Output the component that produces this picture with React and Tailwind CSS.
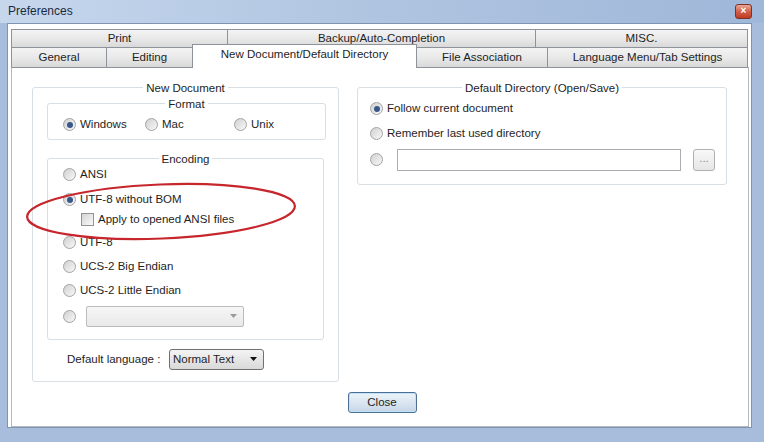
import React from "react";

const Radio = ({ checked }) => (
  <span className="w-[13px] h-[13px] shrink-0 rounded-full border border-[#a3a3a3] bg-linear-to-br from-[#d0d0d0] to-[#f9f9f9] flex items-center justify-center">
    {checked && <span className="w-[6px] h-[6px] rounded-full bg-[#36598a]" />}
  </span>
);

const Option = ({ checked, label, className = "" }) => (
  <div className={`flex items-center h-[16px] gap-[4px] ${className}`}>
    <Radio checked={checked} />
    <span>{label}</span>
  </div>
);

const GroupBox = ({ title, className = "", children }) => (
  <fieldset className={`border border-[#d7dee4] rounded-[3px] ${className}`}>
    <legend className="mx-auto px-[3px] leading-[14px]">{title}</legend>
    {children}
  </fieldset>
);

const Arrow = ({ color }) => (
  <svg width="7" height="4" viewBox="0 0 7 4">
    <path d="M0 0h7L3.5 4z" fill={color} />
  </svg>
);

const Tab = ({ label, className = "" }) => (
  <div
    className={`flex items-center justify-center border-[#8e929a] bg-linear-to-b from-[#f3f3f3] via-[#e9e9e9] to-[#d9d9d9] ${className}`}
  >
    {label}
  </div>
);

export default function App() {
  return (
    <div className="w-[764px] h-[442px] bg-[#a7bddb] flex flex-col pl-[7px] pr-[12px] pb-[14px] text-[11.5px] text-[#1e1e1e] font-['Liberation_Sans',Arial,sans-serif] overflow-hidden">
      {/* title bar */}
      <div className="h-[23px] -ml-[7px] -mr-[12px] pl-[8px] pr-[12px] flex items-center justify-between bg-linear-to-r from-[#c6d7ed] via-[#afc4e0] to-[#9fb7d9]">
        <span className="text-[12px] text-[#1b2a3d]">Preferences</span>
        <div className="w-[17px] h-[15px] rounded-[3px] border border-[#7c3326] bg-linear-to-b from-[#e9a794] via-[#d2604a] to-[#c03a24] flex items-center justify-center text-white text-[10px] font-bold leading-none">
          ×
        </div>
      </div>

      {/* client */}
      <div className="h-[406px] bg-white border border-[#7f94b1] pl-[3px] pr-[2px] pt-[5px]">
        {/* tabs back row */}
        <div className="flex h-[18px]">
          <Tab label="Print" className="w-[216px] border-l border-t" />
          <Tab label="Backup/Auto-Completion" className="w-[308px] border-l border-t" />
          <Tab label="MISC." className="w-[213px] border-l border-t border-r" />
        </div>
        {/* tabs front row */}
        <div className="flex items-end h-[20px]">
          <Tab label="General" className="w-[95px] h-[20px] border-l border-t" />
          <Tab label="Editing" className="w-[86px] h-[20px] border-l border-t" />
          <div className="relative z-10 w-[225px] h-[24px] -mb-[1px] pb-[3px] bg-white border-l border-t border-r border-[#8e929a] flex items-center justify-center">
            New Document/Default Directory
          </div>
          <Tab label="File Association" className="w-[130px] h-[20px] border-t" />
          <Tab label="Language Menu/Tab Settings" className="w-[201px] h-[20px] border-l border-t border-r" />
        </div>

        {/* tab page */}
        <div className="h-[360px] border border-[#b4b8bf] border-t-[#8e929a] bg-white pl-[20px] pt-[13px] flex flex-col">
          <div className="flex items-start">
            {/* New Document */}
            <GroupBox title="New Document" className="w-[307px] h-[301px]">
              <GroupBox title="Format" className="mt-[2px] ml-[14px] w-[279px] h-[43px]">
                <div className="flex mt-[6px] pl-[15px]">
                  <Option checked label="Windows" className="w-[82px]" />
                  <Option label="Mac" className="w-[89px]" />
                  <Option label="Unix" />
                </div>
              </GroupBox>

              <GroupBox title="Encoding" className="mt-[12px] ml-[14px] w-[277px] h-[188px]">
                <div className="pl-[15px]">
                  <Option label="ANSI" className="mt-[1px]" />
                  <div className="relative mt-[9px]">
                    <Option checked label="UTF-8 without BOM" />
                    <div className="flex items-center h-[16px] gap-[4px] mt-[4px] pl-[18px]">
                      <span className="w-[13px] h-[13px] shrink-0 border border-[#939393] bg-linear-to-br from-[#d4d4d4] to-[#fafafa]" />
                      <span>Apply to opened ANSI files</span>
                    </div>
                    <svg
                      className="absolute left-[-38px] top-[-10px] overflow-visible pointer-events-none"
                      width="272"
                      height="59"
                      viewBox="0 0 272 59"
                    >
                      <ellipse
                        cx="136"
                        cy="29.5"
                        rx="134"
                        ry="27"
                        fill="none"
                        stroke="#c6262c"
                        strokeWidth="2.2"
                        transform="rotate(-2.3 136 29.5)"
                      />
                    </svg>
                  </div>
                  <Option label="UTF-8" className="mt-[7px]" />
                  <Option label="UCS-2 Big Endian" className="mt-[8px]" />
                  <Option label="UCS-2 Little Endian" className="mt-[8px]" />
                  <div className="flex items-center h-[21px] mt-[7px]">
                    <Radio />
                    <div className="ml-[10px] w-[158px] h-[21px] rounded-[2px] border border-[#bcbcbc] bg-linear-to-b from-[#f6f6f6] to-[#e9e9e9] flex items-center justify-end pr-[6px]">
                      <Arrow color="#9a9a9a" />
                    </div>
                  </div>
                </div>
              </GroupBox>

              <div className="flex items-center h-[21px] mt-[9px] pl-[34px]">
                <span className="w-[102px]">Default language :</span>
                <div className="w-[95px] h-[21px] rounded-[3px] border border-[#707070] bg-linear-to-b from-[#f4f4f4] to-[#d9d9d9] flex items-center justify-between pl-[3px] pr-[6px]">
                  <span>Normal Text</span>
                  <Arrow color="#111" />
                </div>
              </div>
            </GroupBox>

            {/* Default Directory */}
            <GroupBox title="Default Directory (Open/Save)" className="ml-[18px] w-[370px] h-[104px]">
              <div className="pl-[12px]">
                <Option checked label="Follow current document" className="mt-[6px]" />
                <Option label="Remember last used directory" className="mt-[9px]" />
                <div className="flex items-center h-[22px] mt-[7px]">
                  <Radio />
                  <div className="ml-[14px] w-[284px] h-[22px] border border-[#abadb3] bg-white" />
                  <div className="ml-[12px] w-[22px] h-[22px] rounded-[3px] border border-[#b0b0b0] bg-linear-to-b from-[#f8f8f8] to-[#e6e6e6] flex items-center justify-center text-[#8a8a8a] leading-none pb-[3px]">
                    ...
                  </div>
                </div>
              </div>
            </GroupBox>
          </div>

          <div className="flex justify-center pr-[16px] mt-[10px]">
            <button className="w-[69px] h-[21px] rounded-[3px] border border-[#4d6f93] bg-linear-to-b from-[#edf3f9] via-[#dbe6f1] to-[#c5d6e8] shadow-[inset_0_0_0_1px_#bfe3f7] text-[11.5px] text-[#1e1e1e]">
              Close
            </button>
          </div>
        </div>
      </div>
    </div>
  );
}
